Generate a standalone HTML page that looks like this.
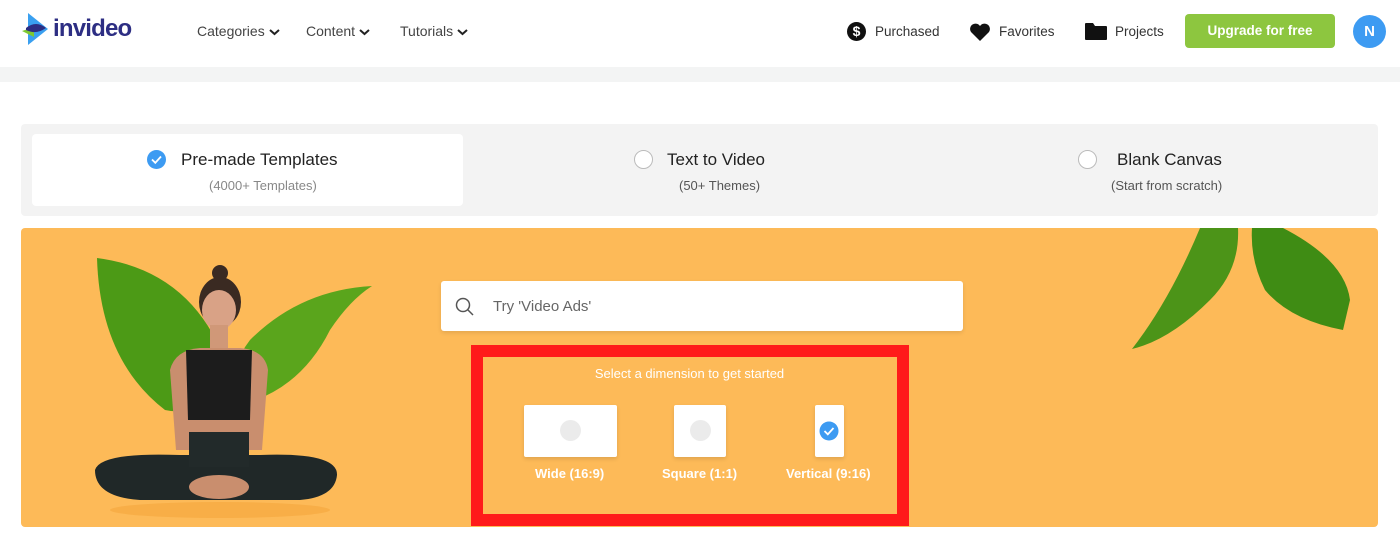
<!DOCTYPE html>
<html><head><meta charset="utf-8"><style>
*{margin:0;padding:0;box-sizing:border-box}
body{width:1400px;height:560px;background:#fff;font-family:"Liberation Sans",sans-serif;position:relative;overflow:hidden;color:#333}
.abs{position:absolute}
.nav{font-size:14px;color:#444;top:23px}
.nav svg{vertical-align:middle;margin-left:4px}
.r{font-size:13.5px;color:#333;top:24px}
</style></head><body>
<!-- logo -->
<svg class="abs" style="left:22px;top:13px" width="30" height="33" viewBox="0 0 30 33">
<polygon points="6,0 26,16 6,32" fill="#3aa0f0"/>
<polygon points="0,18 12,14 12,24" fill="#7ec832"/>
<path d="M4,15 Q14,7 24,15 Q14,22 4,17Z" fill="#2d2e83"/>
</svg>
<div class="abs" style="left:53px;top:15px;font-size:24px;font-weight:bold;color:#2d2e83;letter-spacing:-0.8px">invideo</div>
<div class="abs nav" style="left:197px">Categories<svg width="11" height="8" viewBox="0 0 11 8"><path d="M1,2 L5.5,6 L10,2" stroke="#222" stroke-width="2" fill="none"/></svg></div>
<div class="abs nav" style="left:306px">Content<svg width="11" height="8" viewBox="0 0 11 8"><path d="M1,2 L5.5,6 L10,2" stroke="#222" stroke-width="2" fill="none"/></svg></div>
<div class="abs nav" style="left:400px">Tutorials<svg width="11" height="8" viewBox="0 0 11 8"><path d="M1,2 L5.5,6 L10,2" stroke="#222" stroke-width="2" fill="none"/></svg></div>

<div class="abs" style="left:847px;top:22px;width:19px;height:19px;border-radius:50%;background:#111;color:#fff;font-size:14px;font-weight:bold;text-align:center;line-height:19px">$</div>
<div class="abs r" style="left:875px">Purchased</div>
<svg class="abs" style="left:970px;top:23px" width="20" height="18" viewBox="0 0 20 18"><path d="M10,18 L1,9 A5,5 0 0 1 10,3 A5,5 0 0 1 19,9Z" fill="#111"/></svg>
<div class="abs r" style="left:999px">Favorites</div>
<svg class="abs" style="left:1085px;top:23px" width="22" height="17" viewBox="0 0 22 17"><path d="M0,1 Q0,0 1,0 L8,0 L10,3 L21,3 Q22,3 22,4 L22,16 Q22,17 21,17 L1,17 Q0,17 0,16Z" fill="#111"/></svg>
<div class="abs r" style="left:1115px">Projects</div>
<div class="abs" style="left:1185px;top:14px;width:150px;height:34px;background:#8dc63f;border-radius:4px;color:#fff;font-weight:bold;font-size:13.5px;text-align:center;line-height:34px">Upgrade for free</div>
<div class="abs" style="left:1353px;top:15px;width:33px;height:33px;border-radius:50%;background:#3d9bf2;color:#fff;font-weight:bold;font-size:15px;text-align:center;line-height:33px">N</div>

<div class="abs" style="left:0;top:67px;width:1400px;height:15px;background:#f3f4f4"></div>

<!-- tabs -->
<div class="abs" style="left:21px;top:124px;width:1357px;height:92px;background:#f3f3f3;border-radius:4px"></div>
<div class="abs" style="left:32px;top:134px;width:431px;height:72px;background:#fff;border-radius:4px"></div>
<svg class="abs" style="left:147px;top:150px" width="19" height="19" viewBox="0 0 19 19"><circle cx="9.5" cy="9.5" r="9.5" fill="#3d9bf2"/><path d="M5,9.5 L8.3,12.8 L14,6.5" stroke="#fff" stroke-width="1.8" fill="none"/></svg>
<div class="abs" style="left:181px;top:150px;font-size:17px;color:#222">Pre-made Templates</div>
<div class="abs" style="left:209px;top:178px;font-size:13px;color:#888">(4000+ Templates)</div>
<div class="abs" style="left:634px;top:150px;width:19px;height:19px;border-radius:50%;border:1.5px solid #bbb;background:#fff"></div>
<div class="abs" style="left:667px;top:150px;font-size:17px;color:#222">Text to Video</div>
<div class="abs" style="left:679px;top:178px;font-size:13px;color:#555">(50+ Themes)</div>
<div class="abs" style="left:1078px;top:150px;width:19px;height:19px;border-radius:50%;border:1.5px solid #bbb;background:#fff"></div>
<div class="abs" style="left:1117px;top:150px;font-size:17px;color:#222">Blank Canvas</div>
<div class="abs" style="left:1111px;top:178px;font-size:13px;color:#555">(Start from scratch)</div>

<!-- banner -->
<div class="abs" style="left:21px;top:228px;width:1357px;height:299px;background:#fdba58;border-radius:4px;overflow:hidden">
<svg width="1357" height="299" style="position:absolute;left:0;top:0">
<g transform="translate(-21,-228)">
<ellipse cx="220" cy="510" rx="110" ry="8" fill="#f5a63c" opacity=".6"/>
<path d="M97,258 Q190,270 225,360 Q210,420 165,410 Q100,360 97,258Z" fill="#4c9a16"/>
<path d="M372,286 Q300,290 250,340 Q220,380 240,405 Q300,390 330,330 Q350,300 372,286Z" fill="#5aa51c"/>
<path d="M1200,228 L1238,228 Q1240,270 1210,300 Q1170,340 1132,349 Q1170,300 1200,228Z" fill="#4c9418"/>
<path d="M1252,228 L1283,228 Q1345,260 1350,300 L1343,330 Q1290,320 1265,290 Q1250,260 1252,228Z" fill="#3f8c14"/>
<circle cx="220" cy="273" r="8" fill="#3a2a22"/>
<ellipse cx="220" cy="302" rx="21" ry="25" fill="#3a2a22"/>
<ellipse cx="219" cy="310" rx="17" ry="20" fill="#d9a286"/>
<rect x="210" y="325" width="18" height="25" fill="#d09878"/>
<path d="M170,370 Q175,350 200,348 L240,348 Q265,350 268,370 L262,450 L176,450Z" fill="#c98e6e"/>
<path d="M186,350 L252,350 L250,420 L188,420Z" fill="#1c1c1c"/>
<path d="M95,470 Q100,452 180,455 L260,455 Q338,452 337,475 Q335,497 300,500 L140,500 Q95,497 95,470Z" fill="#202828"/>
<rect x="189" y="432" width="60" height="35" fill="#222a2a"/>
<ellipse cx="219" cy="487" rx="30" ry="12" fill="#c98e6e"/>
</g></svg>
</div>

<!-- search -->
<div class="abs" style="left:441px;top:281px;width:522px;height:50px;background:#fff;border-radius:3px;box-shadow:0 2px 4px rgba(0,0,0,.1)"></div>
<svg class="abs" style="left:455px;top:297px" width="20" height="20" viewBox="0 0 20 20"><circle cx="8" cy="8" r="6.5" stroke="#555" stroke-width="1.5" fill="none"/><path d="M13,13 L18,18" stroke="#555" stroke-width="1.5"/></svg>
<div class="abs" style="left:493px;top:298px;font-size:15px;color:#666">Try 'Video Ads'</div>

<!-- red box -->
<div class="abs" style="left:471px;top:345px;width:438px;height:181px;border:12px solid #ff1a1a"></div>
<div class="abs" style="left:483px;top:366px;width:413px;text-align:center;font-size:13px;color:#fff">Select a dimension to get started</div>
<div class="abs" style="left:524px;top:405px;width:93px;height:52px;background:#fff;border-radius:2px;box-shadow:0 2px 4px rgba(0,0,0,.12)"><div style="margin:15px auto 0;width:21px;height:21px;border-radius:50%;background:#ebebeb"></div></div>
<div class="abs" style="left:674px;top:405px;width:52px;height:52px;background:#fff;border-radius:2px;box-shadow:0 2px 4px rgba(0,0,0,.12)"><div style="margin:15px auto 0;width:21px;height:21px;border-radius:50%;background:#ebebeb"></div></div>
<div class="abs" style="left:815px;top:405px;width:29px;height:52px;background:#fff;border-radius:2px;box-shadow:0 2px 4px rgba(0,0,0,.12)"></div>
<svg class="abs" style="left:819px;top:421px" width="20" height="20" viewBox="0 0 20 20"><circle cx="10" cy="10" r="9.5" fill="#3d9bf2"/><path d="M5.5,10 L8.8,13.3 L14.5,7" stroke="#fff" stroke-width="1.8" fill="none"/></svg>
<div class="abs" style="left:535px;top:466px;font-size:13px;color:#fff;font-weight:bold">Wide (16:9)</div>
<div class="abs" style="left:662px;top:466px;font-size:13px;color:#fff;font-weight:bold">Square (1:1)</div>
<div class="abs" style="left:786px;top:466px;font-size:13px;color:#fff;font-weight:bold">Vertical (9:16)</div>
</body></html>
